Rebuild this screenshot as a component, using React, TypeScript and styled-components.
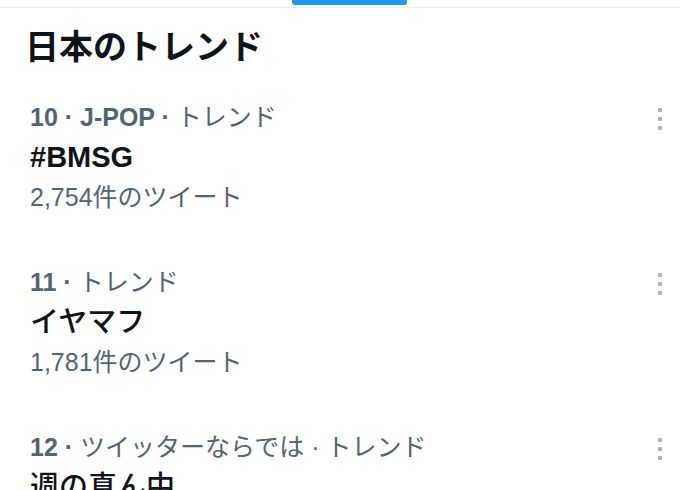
import React from "react"
import styled, { createGlobalStyle } from "styled-components"

const GlobalStyle = createGlobalStyle`
  body {
    margin: 0;
    background: #ffffff;
    font-family: "Liberation Sans", "Noto Sans CJK JP", sans-serif;
    color: #0f1419;
    overflow: hidden;
  }
`

type Part = { text: string, bold?: boolean }

type Trend = {
  id: number
  meta: Part[]
  title: string
  jp?: boolean
  count?: string
}

const trends: Trend[] = [
  {
    id: 10,
    meta: [{ text: "10 · J-POP · ", bold: true }, { text: "トレンド" }],
    title: "#BMSG",
    count: "2,754件のツイート",
  },
  {
    id: 11,
    meta: [{ text: "11 · ", bold: true }, { text: "トレンド" }],
    title: "イヤマフ",
    jp: true,
    count: "1,781件のツイート",
  },
  {
    id: 12,
    meta: [{ text: "12 · ", bold: true }, { text: "ツイッターならでは · トレンド" }],
    title: "週の真ん中",
    jp: true,
  },
]

const Page = styled.div`
  width: 680px;
  height: 490px;
  overflow: hidden;
`

const TabStrip = styled.div`
  height: 7px;
  border-bottom: 1px solid #eceef0;
  display: flex;
  align-items: flex-start;
`

const Indicator = styled.div`
  margin-left: 292px;
  width: 115px;
  height: 5px;
  border-radius: 0 0 3px 3px;
  background: #1d9bf0;
`

const Heading = styled.h2`
  margin: 17px 0 0;
  padding-left: 25px;
  font-family: "Noto Sans CJK JP", sans-serif;
  font-size: 34px;
  line-height: 40px;
  font-weight: 700;
  color: #0f1419;
`

const List = styled.div`
  display: flex;
  flex-direction: column;
  margin-top: 10px;
`

const Row = styled.article`
  display: flex;
  align-items: flex-start;
  padding: 22px 10px 23px 30px;
`

const Content = styled.div`
  flex: 1;
  display: flex;
  flex-direction: column;
`

const Meta = styled.div`
  font-size: 25px;
  line-height: 40px;
  color: #536471;
  white-space: nowrap;
`

const Strong = styled.span<{ $bold?: boolean }>`
  font-weight: ${ p => p.$bold ? 700 : 400 };
`

const Title = styled.div<{ $jp?: boolean }>`
  font-size: 29px;
  line-height: 40px;
  font-weight: ${ p => p.$jp ? 500 : 700 };
  color: #0f1419;
`

const Count = styled.div`
  font-size: 25px;
  line-height: 40px;
  color: #536471;
`

const MoreButton = styled.button`
  border: none;
  background: none;
  padding: 0;
  margin-top: 10px;
  width: 20px;
  height: 24px;
  display: flex;
  color: #aab3ba;
`

const MoreIcon = () => (
  <svg width="20" height="24" viewBox="0 0 20 24">
    <circle cx="10" cy="3" r="2.3" fill="currentColor" />
    <circle cx="10" cy="12" r="2.3" fill="currentColor" />
    <circle cx="10" cy="21" r="2.3" fill="currentColor" />
  </svg>
)

const TrendItem: React.FC<{ trend: Trend }> = ({ trend }) => (
  <Row>
    <Content>
      <Meta>
        { trend.meta.map((part, i) => (
          <Strong key={ i } $bold={ part.bold }>{ part.text }</Strong>
        )) }
      </Meta>
      <Title $jp={ trend.jp }>{ trend.title }</Title>
      { trend.count && <Count>{ trend.count }</Count> }
    </Content>
    <MoreButton title="More"><MoreIcon /></MoreButton>
  </Row>
)

export default function App() {
  return (
    <Page>
      <GlobalStyle />
      <TabStrip><Indicator /></TabStrip>
      <Heading>日本のトレンド</Heading>
      <List>
        { trends.map(trend => <TrendItem key={ trend.id } trend={ trend } />) }
      </List>
    </Page>
  )
}
